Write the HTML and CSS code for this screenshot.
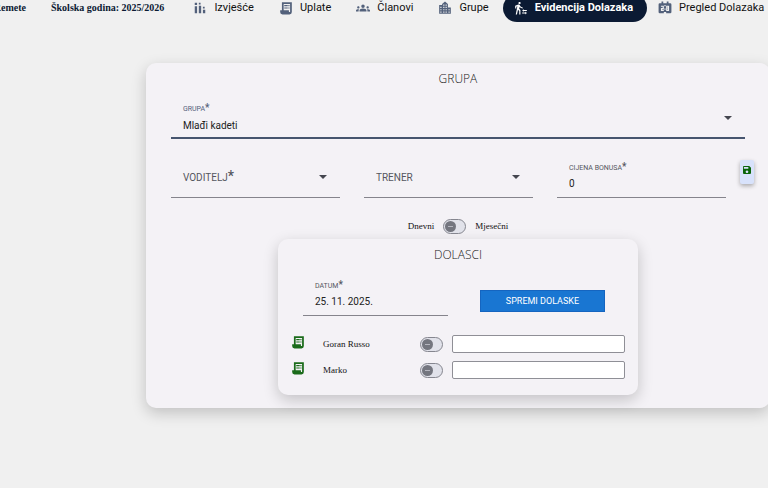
FILE: index.html
```html
<!DOCTYPE html>
<html lang="hr">
<head>
    <meta charset="UTF-8">
    <meta name="viewport" content="width=device-width, initial-scale=1.0">
    <title>Evidencija Dolazaka</title>
    <link rel="stylesheet" href="styles.css">
</head>
<body>
    <header class="topbar">
        <div class="club"><span>Remete</span></div>
        <div class="season">Školska godina: 2025/2026</div>
        <nav class="menu">
            <a href="#">
                <svg viewBox="0 0 24 24"><path d="M3 9h4v12H3zM10 8h4v13h-4zM3 3h4v4H3zM10 3h3v3h-3zM17 15h4v6h-4zM17 10h3v3h-3z"/></svg>
                Izvješće
            </a>
            <a href="#">
                <svg viewBox="0 0 24 24"><path fill-rule="evenodd" d="M5 2h17v17q0 4-4 4H6q-4 0-4-4v-3h3zM8 5v11h9v3h2V5zM9 7h6v2H9zM16 7h2v2h-2zM9 11h6v2H9zM16 11h2v2h-2z"/></svg>
                Uplate
            </a>
            <a href="#">
                <svg viewBox="0 0 24 24"><path d="M4 13c1.100 0 2-.900 2-2s-.900-2-2-2-2 .900-2 2 .900 2 2 2zm1.130 1.100C4.760 14.040 4.390 14 4 14c-.990 0-1.930.210-2.780.580C.480 14.900 0 15.620 0 16.430V18h4.500v-1.610c0-.830.230-1.610.630-2.290zM20 13c1.100 0 2-.900 2-2s-.900-2-2-2-2 .900-2 2 .900 2 2 2zm4 3.430c0-.810-.480-1.530-1.220-1.850A6.950 6.950 0 0 0 20 14c-.390 0-.760.040-1.130.100.400.680.630 1.460.630 2.290V18H24v-1.570zM16.240 13.650A10.500 10.500 0 0 0 12 12.750c-1.630 0-3.070.390-4.240.900A2.980 2.980 0 0 0 6 16.390V18h12v-1.610c0-1.180-.680-2.260-1.760-2.740zM12 6a3 3 0 1 0 0 6 3 3 0 0 0 0-6z"/></svg>
                Članovi
            </a>
            <a href="#">
                <svg viewBox="0 0 24 24"><path d="M17 11V5l-5-4-5 4v2H2v15h20V11h-5zM6 20H4v-2h2v2zm0-4H4v-2h2v2zm0-4H4v-2h2v2zm5 8H9v-2h2v2zm0-4H9v-2h2v2zm0-4H9v-2h2v2zm0-4H9V6h2v2zm4 12h-2v-2h2v2zm0-4h-2v-2h2v2zm0-4h-2v-2h2v2zm0-4h-2V6h2v2zm5 12h-2v-2h2v2zm0-4h-2v-2h2v2z"/></svg>
                Grupe
            </a>
            <a href="#" class="active">
                <svg viewBox="0 0 24 24"><path d="M16.490 15.500v-1.750L14 16.250l2.490 2.500V17H22v-1.500zM19.510 19.750H14v1.500h5.510V23L22 20.500 19.510 18zM9.500 5.500c1.100 0 2-.900 2-2s-.900-2-2-2-2 .900-2 2 .900 2 2 2zM5.750 8.900 3 23h2.100l1.750-8L9 17v6h2v-7.550L8.950 13.400l.600-3A7.270 7.270 0 0 0 15 13v-2c-1.850 0-3.450-1-4.350-2.450l-.950-1.600A2.010 2.010 0 0 0 7.350 6.100L2 8.300V13h2V9.650l1.750-.750z"/></svg>
                Evidencija Dolazaka
            </a>
            <a href="#">
                <svg viewBox="0 0 24 24"><path fill-rule="evenodd" d="M3 4h3V1h3v3h6V1h3v3h3q2 0 2 2v13q0 2-2 2h-7v-2h-4v2H3q-2 0-2-2V6q0-2 2-2zM5 8v2h3v2H5v5h5v-2H7v-1h3V8zM14 8v9h5V8zM16 10h1v1h-1zM16 13h1v2h-1zM11 7v2h2V7zM11 13v2h2v-2z"/></svg>
                Pregled Dolazaka
            </a>
        </nav>
    </header>

    <main class="card group-card">
        <h1>GRUPA</h1>
        <div class="field focused">
            <label for="grupa">GRUPA<sup>*</sup></label>
            <select id="grupa">
                <option>Mlađi kadeti</option>
            </select>
        </div>
        <div class="field-row">
            <div class="field empty">
                <label for="voditelj">VODITELJ<sup>*</sup></label>
                <select id="voditelj"><option></option></select>
            </div>
            <div class="field empty">
                <label for="trener">TRENER</label>
                <select id="trener"><option></option></select>
            </div>
            <div class="field">
                <label for="bonus">CIJENA BONUSA<sup>*</sup></label>
                <input type="text" id="bonus" value="0">
            </div>
            <button class="save" aria-label="Spremi">
                <svg viewBox="3 3 18 18"><path d="M17 3H5a2 2 0 0 0-2 2v14c0 1.100.900 2 2 2h14c1.100 0 2-.900 2-2V7l-4-4zm-5 16c-1.660 0-3-1.340-3-3s1.340-3 3-3 3 1.340 3 3-1.340 3-3 3zm3-10H5V5h10v4z"/></svg>
            </button>
        </div>

        <div class="period">
            <span>Dnevni</span>
            <input type="checkbox" role="switch" class="toggle" id="period">
            <label for="period">Mjesečni</label>
        </div>

        <section class="card attendance">
            <h2>DOLASCI</h2>
            <div class="date-row">
                <div class="field">
                    <label for="datum">DATUM<sup>*</sup></label>
                    <input type="text" id="datum" value="25. 11. 2025.">
                </div>
                <button class="submit">SPREMI DOLASKE</button>
            </div>
            <div class="member">
                <svg viewBox="0 0 24 24"><path fill-rule="evenodd" d="M5 2h17v17q0 4-4 4H6q-4 0-4-4v-3h3zM8 5v11h9v3h2V5zM9 7h6v2H9zM16 7h2v2h-2zM9 11h6v2H9zM16 11h2v2h-2z"/></svg>
                <label for="member1">Goran Russo</label>
                <input type="checkbox" role="switch" class="toggle" id="member1">
                <input type="text" class="note" aria-label="Napomena, Goran Russo">
            </div>
            <div class="member">
                <svg viewBox="0 0 24 24"><path fill-rule="evenodd" d="M5 2h17v17q0 4-4 4H6q-4 0-4-4v-3h3zM8 5v11h9v3h2V5zM9 7h6v2H9zM16 7h2v2h-2zM9 11h6v2H9zM16 11h2v2h-2z"/></svg>
                <label for="member2">Marko</label>
                <input type="checkbox" role="switch" class="toggle" id="member2">
                <input type="text" class="note" aria-label="Napomena, Marko">
            </div>
        </section>
    </main>
</body>
</html>
```

FILE: styles.css
```css
* {
    box-sizing: border-box;
}
body {
    margin: 0;
    background-color: #f0f0f0;
    font-family: "Liberation Serif", serif;
    font-size: 9px;
    color: #111;
    overflow-x: hidden;
}

/* top bar */
.topbar {
    display: flex;
    align-items: flex-end;
    height: 22px;
    overflow: hidden;
    white-space: nowrap;
    font-size: 10px;
    font-weight: bold;
    line-height: 28px;
    color: #0b1a33;
}
.club {
    display: flex;
    justify-content: flex-end;
    width: 26px;
    margin-right: 25px;
}
.season {
    margin-right: 18px;
}
.menu {
    display: flex;
}
.menu a {
    display: flex;
    align-items: center;
    gap: 7px;
    height: 28px;
    padding: 0 14px 0 11px;
    border-radius: 14px;
    font-family: Roboto, sans-serif;
    font-size: 11px;
    font-weight: 400;
    color: #111;
    text-decoration: none;
}
.menu svg {
    width: 14px;
    height: 14px;
    fill: #53617b;
}
.menu .active {
    background: #0b1a33;
    color: white;
    font-weight: bold;
}
.menu .active svg {
    fill: white;
}

/* cards */
.card {
    background: #f4f2f6;
    border-radius: 10px;
    box-shadow: 0 5px 15px rgba(0, 0, 0, 0.2);
}
.card h1, .card h2 {
    margin: 0;
    font-family: "Open Sans", sans-serif;
    font-size: 12px;
    font-weight: 300;
    line-height: 16px;
    text-align: center;
    color: #222;
}
.group-card {
    margin: 41px -2px 40px 19%;
    padding: 8px 25px 13px;
}

/* form fields */
.field {
    position: relative;
    flex: 1;
    height: 42px;
    padding: 18px 12px 0;
    border-bottom: 1px solid #85848c;
    font-family: Roboto, sans-serif;
}
.field label {
    position: absolute;
    top: 6px;
    left: 12px;
    font-size: 7px;
    line-height: 12px;
    color: #55565e;
    pointer-events: none;
}
.field sup {
    font-size: 10px;
    font-weight: 500;
    line-height: 0;
    vertical-align: baseline;
}
.field input, .field select {
    display: block;
    width: 100%;
    height: 18px;
    padding: 0;
    border: none;
    outline: none;
    appearance: none;
    background: transparent;
    font-family: inherit;
    font-size: 10px;
    color: #222;
}
.field select {
    height: 20px;
}
.field:has(select)::after {
    content: "";
    position: absolute;
    top: 19px;
    right: 13px;
    border: 4px solid transparent;
    border-top-color: #44464f;
    border-bottom: none;
    pointer-events: none;
}
.field.empty label {
    top: 16px;
    font-size: 10px;
}
.field.empty sup {
    font-size: 14px;
}
.focused {
    margin-top: 10px;
    border-bottom: 2px solid #46556f;
}
.focused label {
    color: #53617b;
}
.field-row {
    display: flex;
    gap: 24px;
    margin: 17px -9px 0 0;
}
.save {
    width: 14px;
    height: 24px;
    margin: 4px 0 0 -10px;
    padding: 0 3px 4px;
    border: none;
    border-radius: 2px;
    background: #d8e2fb;
    box-shadow: 0 2px 4px rgba(0, 0, 0, 0.3);
    cursor: pointer;
}
.save svg {
    display: block;
    width: 8px;
    height: 8px;
    fill: #0b650b;
}

/* switches */
.toggle {
    appearance: none;
    display: flex;
    align-items: center;
    flex: none;
    width: 23px;
    height: 15px;
    margin: 0;
    padding: 0 1px;
    border: 1px solid #85868f;
    border-radius: 8px;
    background: #e1e2ea;
    cursor: pointer;
}
.toggle::before {
    content: "";
    width: 11px;
    height: 11px;
    border-radius: 50%;
    background: linear-gradient(#b5b6bf, #b5b6bf) center / 5px 1px no-repeat #74767f;
}
.toggle:checked {
    justify-content: flex-end;
}
.period {
    display: flex;
    justify-content: center;
    align-items: center;
    gap: 9px;
    height: 16px;
    margin: 20px 0 5px;
}

/* attendance */
.attendance {
    width: 360px;
    max-width: 100%;
    margin: 0 auto;
    padding: 8px 13px 12px;
}
.date-row {
    display: flex;
    align-items: center;
    gap: 32px;
    margin: 11px 20px 15px 12px;
}
.submit {
    width: 125px;
    height: 22px;
    margin-top: 11px;
    border: 1px solid #1565c0;
    background: #1976d2;
    color: white;
    font-family: Roboto, sans-serif;
    font-size: 9px;
    cursor: pointer;
}
.member {
    display: flex;
    align-items: center;
    height: 26px;
}
.member svg {
    width: 14px;
    height: 14px;
    margin: 0 18px 4px 0;
    fill: #1a6b1a;
}
.member label {
    flex: 1;
}
.note {
    width: 173px;
    height: 18px;
    margin-left: 9px;
    border: 1px solid #8f8f96;
    border-radius: 2px;
    background: white;
    font-family: inherit;
}
```
